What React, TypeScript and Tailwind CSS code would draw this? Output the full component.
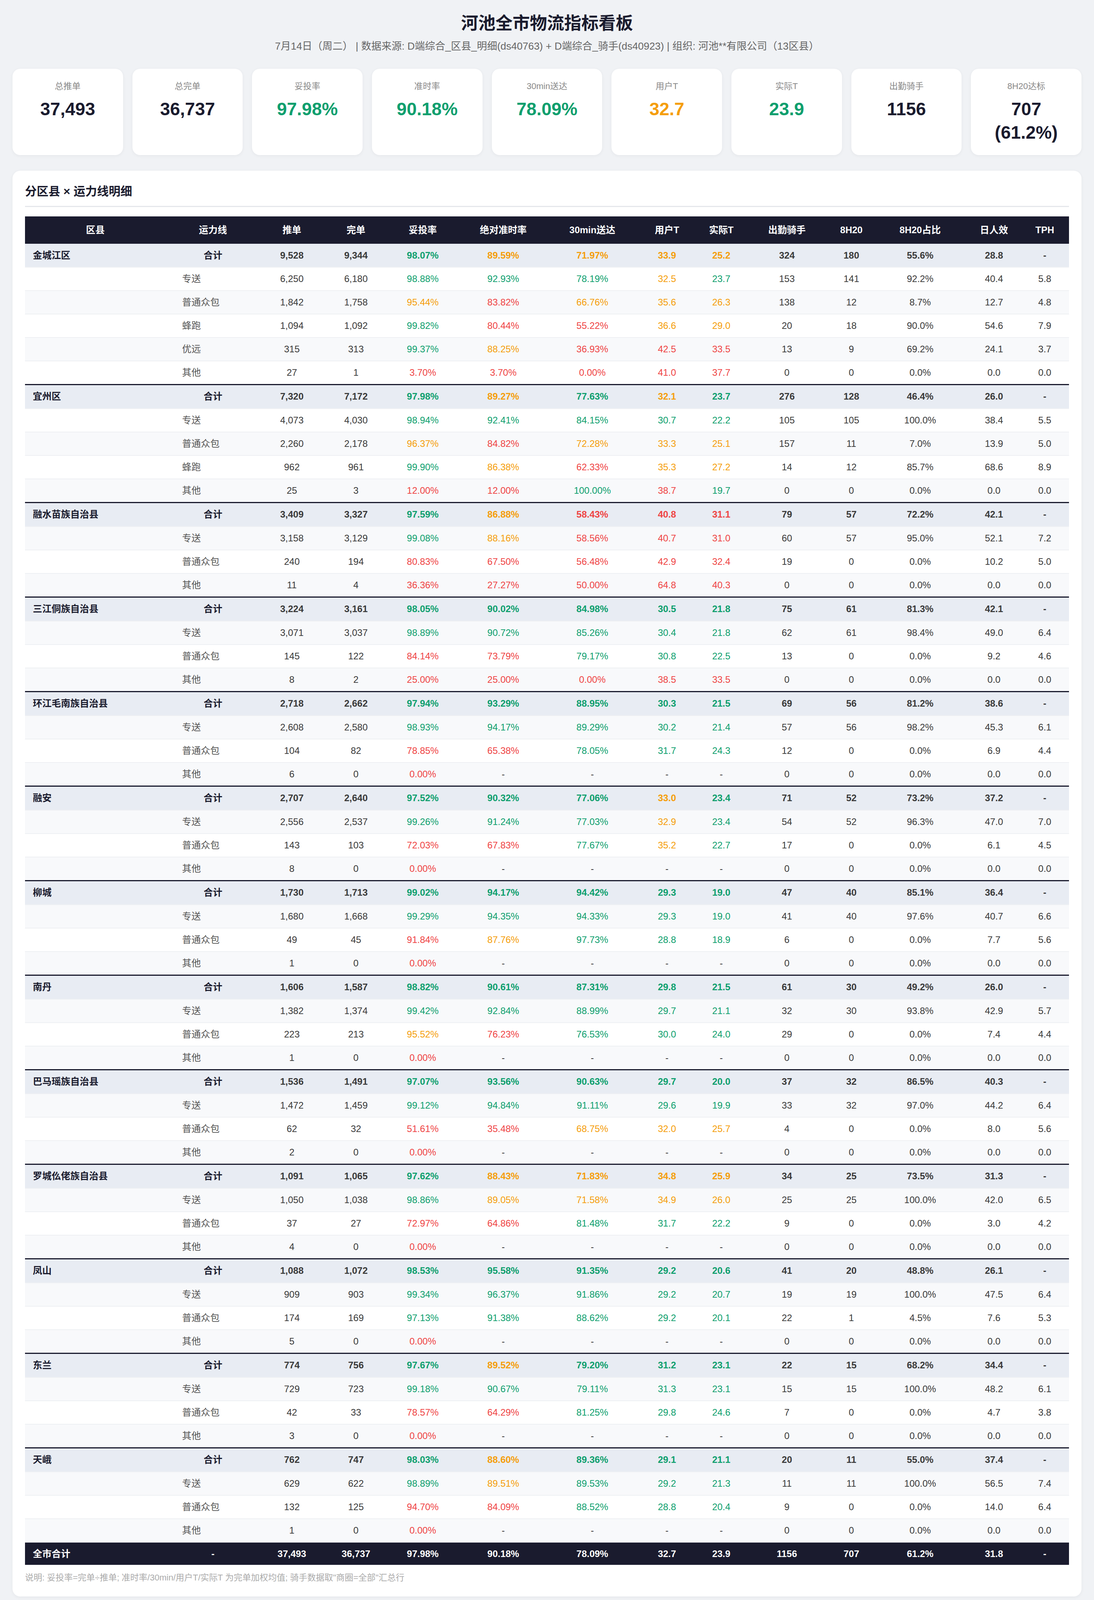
import React from "react";

type Tone = "g" | "o" | "r" | "n";

const toneClass: Record<Tone, string> = {
  g: "text-[#0e9f6e]",
  o: "text-[#f59e0b]",
  r: "text-[#ef4444]",
  n: "",
};

// value columns: 0 推单 1 完单 2 妥投率 3 准时率 4 30min 5 用户T 6 实际T 7 出勤 8 8H20 9 占比 10 日人效 11 TPH
function tone(col: number, v: string): Tone {
  if (v === "-") return "n";
  const x = parseFloat(v);
  switch (col) {
    case 2:
      return x >= 97 ? "g" : x >= 95 ? "o" : "r";
    case 3:
      return x >= 90 ? "g" : x >= 85 ? "o" : "r";
    case 4:
      return x >= 75 ? "g" : x >= 65 ? "o" : "r";
    case 5:
      return x < 32 ? "g" : x < 38 ? "o" : "r";
    case 6:
      return x < 25 ? "g" : x < 30 ? "o" : "r";
    default:
      return "n";
  }
}

const groups: { name: string; rows: string[] }[] = [
  {
    name: "金城江区",
    rows: [
      "合计 9,528 9,344 98.07% 89.59% 71.97% 33.9 25.2 324 180 55.6% 28.8 -",
      "专送 6,250 6,180 98.88% 92.93% 78.19% 32.5 23.7 153 141 92.2% 40.4 5.8",
      "普通众包 1,842 1,758 95.44% 83.82% 66.76% 35.6 26.3 138 12 8.7% 12.7 4.8",
      "蜂跑 1,094 1,092 99.82% 80.44% 55.22% 36.6 29.0 20 18 90.0% 54.6 7.9",
      "优远 315 313 99.37% 88.25% 36.93% 42.5 33.5 13 9 69.2% 24.1 3.7",
      "其他 27 1 3.70% 3.70% 0.00% 41.0 37.7 0 0 0.0% 0.0 0.0",
    ],
  },
  {
    name: "宜州区",
    rows: [
      "合计 7,320 7,172 97.98% 89.27% 77.63% 32.1 23.7 276 128 46.4% 26.0 -",
      "专送 4,073 4,030 98.94% 92.41% 84.15% 30.7 22.2 105 105 100.0% 38.4 5.5",
      "普通众包 2,260 2,178 96.37% 84.82% 72.28% 33.3 25.1 157 11 7.0% 13.9 5.0",
      "蜂跑 962 961 99.90% 86.38% 62.33% 35.3 27.2 14 12 85.7% 68.6 8.9",
      "其他 25 3 12.00% 12.00% 100.00% 38.7 19.7 0 0 0.0% 0.0 0.0",
    ],
  },
  {
    name: "融水苗族自治县",
    rows: [
      "合计 3,409 3,327 97.59% 86.88% 58.43% 40.8 31.1 79 57 72.2% 42.1 -",
      "专送 3,158 3,129 99.08% 88.16% 58.56% 40.7 31.0 60 57 95.0% 52.1 7.2",
      "普通众包 240 194 80.83% 67.50% 56.48% 42.9 32.4 19 0 0.0% 10.2 5.0",
      "其他 11 4 36.36% 27.27% 50.00% 64.8 40.3 0 0 0.0% 0.0 0.0",
    ],
  },
  {
    name: "三江侗族自治县",
    rows: [
      "合计 3,224 3,161 98.05% 90.02% 84.98% 30.5 21.8 75 61 81.3% 42.1 -",
      "专送 3,071 3,037 98.89% 90.72% 85.26% 30.4 21.8 62 61 98.4% 49.0 6.4",
      "普通众包 145 122 84.14% 73.79% 79.17% 30.8 22.5 13 0 0.0% 9.2 4.6",
      "其他 8 2 25.00% 25.00% 0.00% 38.5 33.5 0 0 0.0% 0.0 0.0",
    ],
  },
  {
    name: "环江毛南族自治县",
    rows: [
      "合计 2,718 2,662 97.94% 93.29% 88.95% 30.3 21.5 69 56 81.2% 38.6 -",
      "专送 2,608 2,580 98.93% 94.17% 89.29% 30.2 21.4 57 56 98.2% 45.3 6.1",
      "普通众包 104 82 78.85% 65.38% 78.05% 31.7 24.3 12 0 0.0% 6.9 4.4",
      "其他 6 0 0.00% - - - - 0 0 0.0% 0.0 0.0",
    ],
  },
  {
    name: "融安",
    rows: [
      "合计 2,707 2,640 97.52% 90.32% 77.06% 33.0 23.4 71 52 73.2% 37.2 -",
      "专送 2,556 2,537 99.26% 91.24% 77.03% 32.9 23.4 54 52 96.3% 47.0 7.0",
      "普通众包 143 103 72.03% 67.83% 77.67% 35.2 22.7 17 0 0.0% 6.1 4.5",
      "其他 8 0 0.00% - - - - 0 0 0.0% 0.0 0.0",
    ],
  },
  {
    name: "柳城",
    rows: [
      "合计 1,730 1,713 99.02% 94.17% 94.42% 29.3 19.0 47 40 85.1% 36.4 -",
      "专送 1,680 1,668 99.29% 94.35% 94.33% 29.3 19.0 41 40 97.6% 40.7 6.6",
      "普通众包 49 45 91.84% 87.76% 97.73% 28.8 18.9 6 0 0.0% 7.7 5.6",
      "其他 1 0 0.00% - - - - 0 0 0.0% 0.0 0.0",
    ],
  },
  {
    name: "南丹",
    rows: [
      "合计 1,606 1,587 98.82% 90.61% 87.31% 29.8 21.5 61 30 49.2% 26.0 -",
      "专送 1,382 1,374 99.42% 92.84% 88.99% 29.7 21.1 32 30 93.8% 42.9 5.7",
      "普通众包 223 213 95.52% 76.23% 76.53% 30.0 24.0 29 0 0.0% 7.4 4.4",
      "其他 1 0 0.00% - - - - 0 0 0.0% 0.0 0.0",
    ],
  },
  {
    name: "巴马瑶族自治县",
    rows: [
      "合计 1,536 1,491 97.07% 93.56% 90.63% 29.7 20.0 37 32 86.5% 40.3 -",
      "专送 1,472 1,459 99.12% 94.84% 91.11% 29.6 19.9 33 32 97.0% 44.2 6.4",
      "普通众包 62 32 51.61% 35.48% 68.75% 32.0 25.7 4 0 0.0% 8.0 5.6",
      "其他 2 0 0.00% - - - - 0 0 0.0% 0.0 0.0",
    ],
  },
  {
    name: "罗城仫佬族自治县",
    rows: [
      "合计 1,091 1,065 97.62% 88.43% 71.83% 34.8 25.9 34 25 73.5% 31.3 -",
      "专送 1,050 1,038 98.86% 89.05% 71.58% 34.9 26.0 25 25 100.0% 42.0 6.5",
      "普通众包 37 27 72.97% 64.86% 81.48% 31.7 22.2 9 0 0.0% 3.0 4.2",
      "其他 4 0 0.00% - - - - 0 0 0.0% 0.0 0.0",
    ],
  },
  {
    name: "凤山",
    rows: [
      "合计 1,088 1,072 98.53% 95.58% 91.35% 29.2 20.6 41 20 48.8% 26.1 -",
      "专送 909 903 99.34% 96.37% 91.86% 29.2 20.7 19 19 100.0% 47.5 6.4",
      "普通众包 174 169 97.13% 91.38% 88.62% 29.2 20.1 22 1 4.5% 7.6 5.3",
      "其他 5 0 0.00% - - - - 0 0 0.0% 0.0 0.0",
    ],
  },
  {
    name: "东兰",
    rows: [
      "合计 774 756 97.67% 89.52% 79.20% 31.2 23.1 22 15 68.2% 34.4 -",
      "专送 729 723 99.18% 90.67% 79.11% 31.3 23.1 15 15 100.0% 48.2 6.1",
      "普通众包 42 33 78.57% 64.29% 81.25% 29.8 24.6 7 0 0.0% 4.7 3.8",
      "其他 3 0 0.00% - - - - 0 0 0.0% 0.0 0.0",
    ],
  },
  {
    name: "天峨",
    rows: [
      "合计 762 747 98.03% 88.60% 89.36% 29.1 21.1 20 11 55.0% 37.4 -",
      "专送 629 622 98.89% 89.51% 89.53% 29.2 21.3 11 11 100.0% 56.5 7.4",
      "普通众包 132 125 94.70% 84.09% 88.52% 28.8 20.4 9 0 0.0% 14.0 6.4",
      "其他 1 0 0.00% - - - - 0 0 0.0% 0.0 0.0",
    ],
  },
];

const cityTotal = "37,493 36,737 97.98% 90.18% 78.09% 32.7 23.9 1156 707 61.2% 31.8 -".split(" ");

const kpis: { label: string; value: React.ReactNode; cls: string }[] = [
  { label: "总推单", value: "37,493", cls: "text-[#1a1b2e]" },
  { label: "总完单", value: "36,737", cls: "text-[#1a1b2e]" },
  { label: "妥投率", value: "97.98%", cls: "text-[#0e9f6e]" },
  { label: "准时率", value: "90.18%", cls: "text-[#0e9f6e]" },
  { label: "30min送达", value: "78.09%", cls: "text-[#0e9f6e]" },
  { label: "用户T", value: "32.7", cls: "text-[#f59e0b]" },
  { label: "实际T", value: "23.9", cls: "text-[#0e9f6e]" },
  { label: "出勤骑手", value: "1156", cls: "text-[#1a1b2e]" },
  {
    label: "8H20达标",
    value: (
      <>
        707
        <br />
        (61.2%)
      </>
    ),
    cls: "text-[#1a1b2e]",
  },
];

const detailHead = ["区县", "运力线", "推单", "完单", "妥投率", "绝对准时率", "30min送达", "用户T", "实际T", "出勤骑手", "8H20", "8H20占比", "日人效", "TPH"];
const detailCols = [360, 242, 162, 166, 176, 236, 220, 162, 116, 220, 110, 242, 136, 124];

const sumHead = ["区县", "推单", "完单", "妥投率", "准时率", "30min", "用户T", "实际T", "出勤骑手", "8H20", "8H20占比", "日人效"];
const sumCols = [438, 196, 196, 220, 218, 220, 166, 172, 234, 164, 260, 188];

const Card = ({ title, children }: { title: string; children: React.ReactNode }) => (
  <section className="mb-8 rounded-[20px] bg-white p-8 shadow-[0_2px_10px_rgba(20,24,40,0.05)]">
    <h2 className="border-b-[3px] border-[#e5e7eb] pb-4 text-[30px] font-bold leading-[42px] text-[#1a1b2e]">{title}</h2>
    {children}
  </section>
);

const HeadRow = ({ cells }: { cells: string[] }) => (
  <tr>
    {cells.map((h) => (
      <th key={h} className="h-[70px] bg-[#1a1b2e] px-1 text-center text-[24px] font-bold text-white">
        {h}
      </th>
    ))}
  </tr>
);

const DetailTable = () => {
  let idx = 0;
  return (
    <table className="mt-6 w-full table-fixed border-collapse text-[24px] text-[#3a3a3a]">
      <colgroup>
        {detailCols.map((w, i) => (
          <col key={i} style={{ width: w }} />
        ))}
      </colgroup>
      <thead>
        <HeadRow cells={detailHead} />
      </thead>
      <tbody>
        {groups.map((g, gi) =>
          g.rows.map((line, ri) => {
            const i = idx++;
            const [label, ...vals] = line.split(" ");
            const isGroup = ri === 0;
            const bg = isGroup ? "bg-[#e8ecf3]" : i % 2 === 0 ? "bg-[#f8f9fb]" : "bg-white";
            const sep = isGroup && gi > 0;
            return (
              <tr
                key={`${gi}-${ri}`}
                className={`${bg} ${sep ? "border-t-[3px] border-t-[#1a1b2e]" : ""} border-b-2 border-b-[#eef0f3] ${isGroup ? "font-semibold" : ""}`}
              >
                <td className={`${sep ? "h-[62px]" : "h-[60px]"} pl-5 text-left font-bold text-[#1a1b2e]`}>{isGroup ? g.name : ""}</td>
                {isGroup ? (
                  <td className="text-center font-bold text-[#1a1b2e]">{label}</td>
                ) : (
                  <td className="pl-[42px] text-left text-[#555]">{label}</td>
                )}
                {vals.map((v, ci) => (
                  <td key={ci} className={`text-center ${toneClass[tone(ci, v)]}`}>
                    {v}
                  </td>
                ))}
              </tr>
            );
          })
        )}
        <tr className="bg-[#1a1b2e] font-bold text-white">
          <td className="h-[58px] pl-5 text-left">全市合计</td>
          <td className="text-center">-</td>
          {cityTotal.map((v, ci) => (
            <td key={ci} className="text-center">
              {v}
            </td>
          ))}
        </tr>
      </tbody>
    </table>
  );
};

const SummaryTable = () => (
  <table className="mt-6 w-full table-fixed border-collapse text-[24px] text-[#3a3a3a]">
    <colgroup>
      {sumCols.map((w, i) => (
        <col key={i} style={{ width: w }} />
      ))}
    </colgroup>
    <thead>
      <HeadRow cells={sumHead} />
    </thead>
    <tbody>
      {groups.map((g, gi) => {
        const vals = g.rows[0].split(" ").slice(1, 12);
        return (
          <tr key={g.name} className={`${gi % 2 === 0 ? "bg-[#f8f9fb]" : "bg-white"} border-b-2 border-b-[#eef0f3]`}>
            <td className="h-[60px] pl-5 text-left font-bold text-[#1a1b2e]">{g.name}</td>
            {vals.map((v, ci) => (
              <td key={ci} className={`text-center ${toneClass[tone(ci, v)]}`}>
                {v}
              </td>
            ))}
          </tr>
        );
      })}
      <tr className="bg-[#1a1b2e] font-bold text-white">
        <td className="h-[58px] text-center">全市合计</td>
        {cityTotal.slice(0, 11).map((v, ci) => (
          <td key={ci} className="text-center">
            {v}
          </td>
        ))}
      </tr>
    </tbody>
  </table>
);

const concerns = [
  "蜂跑/优远30min送达率偏低：金城江区蜂跑55.22%，金城江区优远36.93%，宜州区蜂跑62.33%，拉低全市30min指标（78.09%）。",
  "环江毛南族自治县普通众包妥投率78.85%、融安普通众包妥投率72.03%、巴马瑶族自治县普通众包妥投率51.61%、罗城仫佬族自治县普通众包妥投率72.97%、东兰普通众包妥投率78.57%，存在明显异常，建议排查运力缺口及退单原因。",
  "众包8H20达标率偏低：金城江区8.7%、宜州区7.0%、融水苗族自治县0.0%、三江侗族自治县0.0%，反映众包骑手有效工时不足。",
];

export default function App() {
  return (
    <div className="bg-[#f0f2f5] px-8 pb-5 pt-8 font-['Liberation_Sans','Noto_Sans_CJK_SC',sans-serif]">
      {/* Header */}
      <h1 className="text-center text-[44px] font-bold leading-[56px] text-[#1a1b2e]">河池全市物流指标看板</h1>
      <p className="mt-3 text-center text-[26px] leading-[36px] text-[#666]">
        7月14日（周二） | 数据来源: D端综合_区县_明细(ds40763) + D端综合_骑手(ds40923) | 组织: 河池**有限公司（13区县）
      </p>

      {/* KPI cards */}
      <div className="mb-10 mt-10 grid grid-cols-9 gap-6">
        {kpis.map((k) => (
          <div key={k.label} className="rounded-[20px] bg-white px-4 py-7 text-center shadow-[0_2px_10px_rgba(20,24,40,0.05)]">
            <div className="text-[22px] leading-[33px] text-[#888]">{k.label}</div>
            <div className={`mt-3 text-[46px] font-bold leading-[60px] ${k.cls}`}>{k.value}</div>
          </div>
        ))}
      </div>

      <Card title="分区县 × 运力线明细">
        <DetailTable />
        <p className="mt-4 text-[22px] leading-[33px] text-[#aaa]">
          说明: 妥投率=完单÷推单; 准时率/30min/用户T/实际T 为完单加权均值; 骑手数据取"商圈=全部"汇总行
        </p>
      </Card>

      <Card title="区县汇总（全运力线合计）">
        <SummaryTable />
      </Card>

      {/* Brief */}
      <section className="rounded-[20px] bg-white px-10 pb-10 pt-10 shadow-[0_2px_10px_rgba(20,24,40,0.05)]">
        <h2 className="border-b-[3px] border-[#1a1b2e] pb-4 text-[32px] font-bold leading-[45px] text-[#1a1b2e]">
          7月14日（周二）物流指标简报
        </h2>
        <h3 className="mt-7 text-[28px] font-bold leading-[42px] text-[#0e9f6e]">亮点</h3>
        <p className="mt-[14px] text-[26px] leading-[46px] tracking-[0.4px] text-[#444]">
          全市推单37,493.0、完单36,737.0，妥投率97.98%整体稳健。柳城30min送达率94.42%、用户T 29.3min领跑全市；凤山准时率95.58%、30min 91.35%表现优异；巴马瑶族自治县准时率93.56%、30min 90.63%表现优异。专送妥投率普遍98%+，8H20达标率多数区县90%以上，骑手出勤质量较好。
        </p>
        <h3 className="mt-8 text-[28px] font-bold leading-[42px] text-[#ef4444]">待关注</h3>
        <ul className="mb-10 mt-[22px] space-y-[14px]">
          {concerns.map((c) => (
            <li key={c} className="flex text-[26px] leading-[48px] text-[#444]">
              <span className="ml-[2px] mr-[20px] mt-[18px] h-[11px] w-[11px] shrink-0 rounded-full bg-[#ef4444]" />
              <span>{c}</span>
            </li>
          ))}
        </ul>
      </section>

      <footer className="mt-8 text-center text-[22px] leading-[33px] text-[#aaa]">
        生成时间: 2026-07-16 | 数据日期: 7月14日（周二） | 妥投率=完单÷推单; 准时率/30min/用户T/实际T为完单加权均值; 骑手数据取"商圈=全部"汇总行 | 组织: 河池**有限公司（13区县）
      </footer>
    </div>
  );
}
